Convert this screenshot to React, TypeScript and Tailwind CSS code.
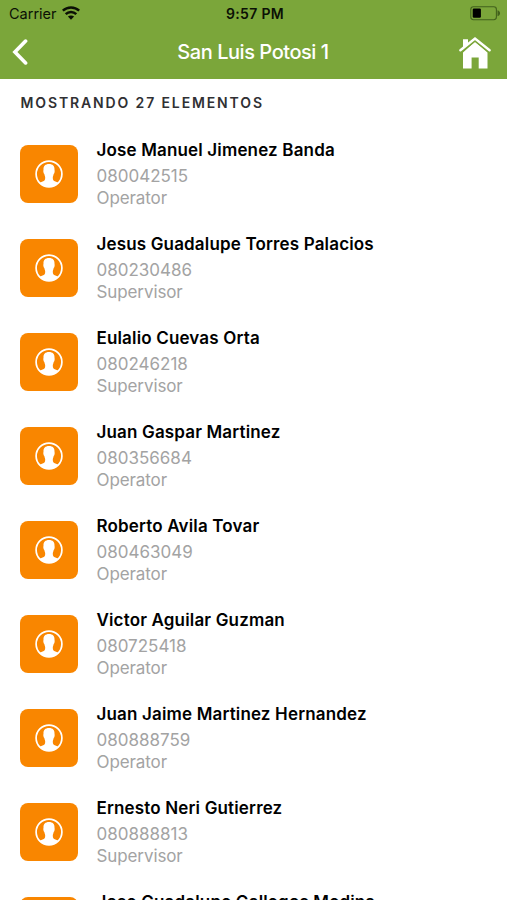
type Person = {
  name: string;
  code: string;
  role: "Operator" | "Supervisor";
};

const people: Person[] = [
  { name: "Jose Manuel Jimenez Banda", code: "080042515", role: "Operator" },
  { name: "Jesus Guadalupe Torres Palacios", code: "080230486", role: "Supervisor" },
  { name: "Eulalio Cuevas Orta", code: "080246218", role: "Supervisor" },
  { name: "Juan Gaspar Martinez", code: "080356684", role: "Operator" },
  { name: "Roberto Avila Tovar", code: "080463049", role: "Operator" },
  { name: "Victor Aguilar Guzman", code: "080725418", role: "Operator" },
  { name: "Juan Jaime Martinez Hernandez", code: "080888759", role: "Operator" },
  { name: "Ernesto Neri Gutierrez", code: "080888813", role: "Supervisor" },
  { name: "Jose Guadalupe Gallegos Medina", code: "080889021", role: "Operator" },
];

function WifiIcon() {
  return (
    <svg className="-mt-px h-[14px] w-[18px]" viewBox="0 0 18 14" fill="none" stroke="#0b1005">
      <path d="M.8 4.7C5.4.4 12.6.4 17.2 4.7" strokeWidth="2.5" />
      <path d="M3.7 8.1c3-2.900 7.600-2.900 10.600 0" strokeWidth="2.5" />
      <path d="M9 13.7 5.900 10.600c1.700-1.600 4.500-1.600 6.200 0Z" fill="#0b1005" stroke="none" />
    </svg>
  );
}

function BatteryIcon() {
  return (
    <svg className="h-[15px] w-[31px]" viewBox="0 0 31 15">
      <rect x="0.8" y="0.8" width="25.6" height="12.9" rx="2.6" fill="none" stroke="#42611c" strokeWidth="1.1" />
      <rect x="2.7" y="2.6" width="8.2" height="9.2" rx="1.2" fill="#000" />
      <path d="M27.5 4.3c3.400 1.200 3.400 4.800 0 6Z" fill="#42611c" />
    </svg>
  );
}

function BackIcon() {
  return (
    <svg className="h-[26px] w-4" viewBox="0 0 16 26" fill="none" stroke="#fff" strokeWidth="3.6" strokeLinecap="round" strokeLinejoin="miter">
      <path d="M13.6 2.1 2.9 13l10.700 10.900" />
    </svg>
  );
}

function HomeIcon() {
  return (
    <svg className="mt-px size-8" viewBox="0 0 32 32" fill="#fff">
      <path d="M4 2.2h5v5L4 11Z" />
      <path d="M16 4.7 28.5 15.500v16h-8.800V20.500h-7.100v11H4V15.500Z" />
      <path d="M.5 15.400 16 3.100l15.500 12.300" fill="none" stroke="#7ba63a" strokeWidth="3" />
      <path d="M1.400 13.300 16 1.600l14.600 11.700" fill="none" stroke="#fff" strokeWidth="2.400" strokeLinecap="round" />
    </svg>
  );
}

function ContactIcon() {
  return (
    <svg className="size-7" viewBox="0 0 28 28">
      <circle cx="14" cy="14" r="12.9" fill="none" stroke="#fff" strokeWidth="1.7" />
      <path
        d="M14 4C10.200 4 8.300 6.200 8.500 9.500c0 .9-.3 1.300-.1 2.400.2 1.300.7 1.600 1 2.400.2 1.500.8 2 .8 3.500 0 2.300-.6 3-2.600 3.700-1.300.5-2.400.9-3.300 1.500C6.600 25.300 10 26.800 14 26.800s7.400-1.500 9.700-3.800c-.9-.6-2-1-3.300-1.500-2-.7-2.600-1.400-2.600-3.700 0-1.500.6-2 .8-3.500.3-.8.8-1.100 1-2.400.2-1.100-.1-1.500-.1-2.400C19.700 6.200 17.800 4 14 4Z"
        fill="#fff"
      />
    </svg>
  );
}

function PersonRow({ person }: { person: Person }) {
  return (
    <li className="flex h-[94.06px] shrink-0 pl-[20.4px]">
      <div className="mt-[7px] flex size-[58px] shrink-0 items-center justify-center rounded-[8px] bg-[#f98600]">
        <ContactIcon />
      </div>
      <div className="ml-[18.1px] whitespace-nowrap">
        <div className="text-[17px] leading-[24px] font-semibold tracking-[0.16px] text-black">{person.name}</div>
        <div className="mt-[3px] text-[17px] leading-[22px] text-[#a3a3a3]">{person.code}</div>
        <div className="text-[17px] leading-[22px] tracking-[-0.1px] text-[#a3a3a3]">{person.role}</div>
      </div>
    </li>
  );
}

export default function App() {
  return (
    <div className="flex h-[900px] w-[507px] flex-col overflow-hidden bg-white font-['Inter',sans-serif]">
      <header className="h-[79px] shrink-0 bg-[#7ba63a]">
        <div className="grid h-[27px] grid-cols-3 items-center pl-[9px] pr-[6px] text-[#0b1005]">
          <div className="flex items-center gap-[5px] text-[14.5px]">
            Carrier
            <WifiIcon />
          </div>
          <div className="text-center text-[14px] font-semibold tracking-[0.35px]">9:57 PM</div>
          <div className="flex justify-end">
            <BatteryIcon />
          </div>
        </div>
        <div className="grid h-[50px] grid-cols-[1fr_auto_1fr] items-center pl-[12px] pr-[16px]">
          <button aria-label="Back" className="justify-self-start">
            <BackIcon />
          </button>
          <h1 className="pl-[3px] text-[20px] font-medium tracking-[-0.45px] text-white">San Luis Potosi 1</h1>
          <button aria-label="Home" className="justify-self-end">
            <HomeIcon />
          </button>
        </div>
      </header>

      <h2 className="mt-[14px] pl-[20.5px] text-[14px] leading-[20px] font-semibold tracking-[1.87px] text-[#303033]">
        MOSTRANDO 27 ELEMENTOS
      </h2>

      <ul className="mt-[25px] flex min-h-0 flex-1 flex-col overflow-hidden">
        {people.map((p) => (
          <PersonRow key={p.code} person={p} />
        ))}
      </ul>
    </div>
  );
}
